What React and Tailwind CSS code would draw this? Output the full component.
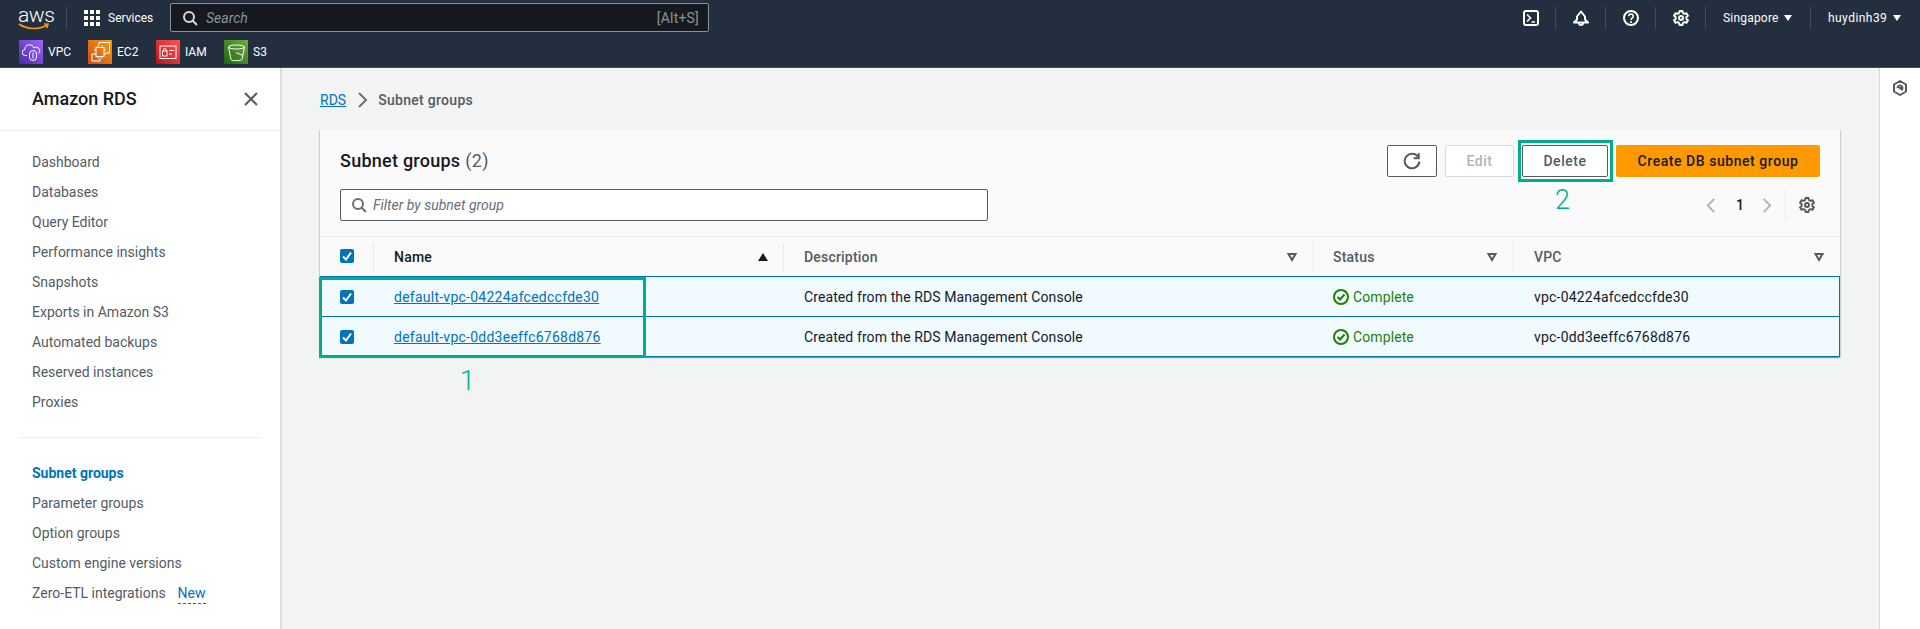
import React from 'react';

const font = "font-['Roboto','Liberation_Sans',sans-serif]";

const navTop = ['Dashboard', 'Databases', 'Query Editor', 'Performance insights', 'Snapshots', 'Exports in Amazon S3', 'Automated backups', 'Reserved instances', 'Proxies'];
const navBottom = ['Parameter groups', 'Option groups', 'Custom engine versions'];

const rows = [
    { name: 'default-vpc-04224afcedccfde30', vpc: 'vpc-04224afcedccfde30' },
    { name: 'default-vpc-0dd3eeffc6768d876', vpc: 'vpc-0dd3eeffc6768d876' },
];

const Checkbox = () => (
    <span className="flex h-[14px] w-[14px] items-center justify-center rounded-[2px] bg-[#0073bb]">
        <svg viewBox="0 0 14 14" className="h-[14px] w-[14px]" fill="none" stroke="#fff" strokeWidth="2">
            <path d="M3 7.5 6 10.5 11 3.5" />
        </svg>
    </span>
);

const FilterCaret = () => (
    <svg viewBox="0 0 10 10" className="h-[10px] w-[10px]" fill="none" stroke="#545b64" strokeWidth="2">
        <path d="M1.5 2h7L5 8z" />
    </svg>
);

const Chevron = ({ dir = 'right', color = '#aab7b8', size = 16 }) => (
    <svg viewBox="0 0 16 16" width={size} height={size} fill="none" stroke={color} strokeWidth="2">
        <path d={dir === 'right' ? 'M5 1l7 7-7 7' : 'M11 1 4 8l7 7'} />
    </svg>
);

const Gear = ({ color = '#fff' }) => (
    <svg viewBox="0 0 16 16" width="16" height="16" fill="none" stroke={color} strokeWidth="2" strokeLinejoin="round">
        <path d="M6.6 1h2.8l.5 2 1.6.9 2-.6 1.4 2.4-1.5 1.4v1.800l1.5 1.4-1.4 2.4-2-.6-1.600.9-.5 2H6.600l-.5-2-1.600-.9-2 .6L1.100 10.300l1.500-1.400V7.100L1.100 5.700l1.400-2.400 2 .6 1.600-.9z" />
        <circle cx="8" cy="8" r="2" />
    </svg>
);

const Search = ({ color }) => (
    <svg viewBox="0 0 16 16" width="16" height="16" fill="none" stroke={color} strokeWidth="2">
        <circle cx="7" cy="7" r="5" />
        <path d="M10.5 10.5 15 15" />
    </svg>
);

const Shortcut = ({ label, width, gradient, children }) => (
    <div className={`flex items-center ${width}`}>
        <span className={`flex h-6 w-6 items-center justify-center bg-gradient-to-tr ${gradient}`}>{children}</span>
        <span className="ml-[5px] text-xs text-white">{label}</span>
    </div>
);

const HeaderSep = () => <span className="ml-4 mr-[17px] h-[22px] w-px bg-[#414d5c]" />;

const Header = () => (
    <header className="h-[68px] shrink-0 border-b border-[#414d5c] bg-[#232f3e]">
        <div className="flex h-[35px] items-center pl-[18px] pr-[19px]">
            <div className="relative h-[22px] w-8 text-center">
                <span className="block text-[21px] font-light leading-[17px] tracking-[-0.4px] text-white">aws</span>
                <svg viewBox="0 0 32 8" className="absolute bottom-[-2px] left-0 h-2 w-8" fill="none" stroke="#ff9900" strokeWidth="1.6">
                    <path d="M1 1c8 5.5 20 6 28 1M26 1l4 .3-1.2 3.6" />
                </svg>
            </div>
            <HeaderSep />
            <svg viewBox="0 0 16 16" width="16" height="16" fill="#fff">
                <rect width="4" height="4" /><rect x="6" width="4" height="4" /><rect x="12" width="4" height="4" />
                <rect y="6" width="4" height="4" /><rect x="6" y="6" width="4" height="4" /><rect x="12" y="6" width="4" height="4" />
                <rect y="12" width="4" height="4" /><rect x="6" y="12" width="4" height="4" /><rect x="12" y="12" width="4" height="4" />
            </svg>
            <span className="ml-2 w-[62px] text-xs text-white">Services</span>
            <div className="flex h-[29px] w-[539px] items-center rounded-[2px] border border-[#879596] bg-[#16191f] pl-[11px] pr-[9px]">
                <Search color="#d5dbdb" />
                <span className="ml-[8px] flex-1 text-sm italic text-[#879596]">Search</span>
                <span className="text-sm tracking-[0.2px] text-[#879596]">[Alt+S]</span>
            </div>
            <div className="ml-auto flex items-center">
                <svg viewBox="0 0 16 16" width="16" height="16" fill="none" stroke="#fff" strokeWidth="2">
                    <rect x="1" y="1" width="14" height="14" rx="2" />
                    <path d="M4 4.5 7.5 8 4 11.5M8.5 12H12" strokeWidth="1.6" />
                </svg>
                <HeaderSep />
                <svg viewBox="0 0 16 16" width="16" height="16" fill="none" stroke="#fff" strokeWidth="2">
                    <path d="M8 1.5 12 6.5v3l3 3H1l3-3v-3z" strokeLinejoin="round" />
                    <path d="M6 13a2 2 0 0 0 4 0" />
                </svg>
                <HeaderSep />
                <svg viewBox="0 0 16 16" width="16" height="16" fill="none" stroke="#fff" strokeWidth="2">
                    <circle cx="8" cy="8" r="7" />
                    <path d="M5.8 6.2a2.2 2.2 0 1 1 3.4 1.8C8.4 8.5 8 9 8 10M8 11v2" strokeWidth="1.6" />
                </svg>
                <HeaderSep />
                <Gear />
                <HeaderSep />
                <span className="w-[55px] text-xs tracking-[0.2px] whitespace-nowrap text-white">Singapore</span>
                <svg viewBox="0 0 8 6" width="8" height="6" fill="#fff" className="ml-[6px]"><path d="M0 0h8L4 6z" /></svg>
                <span className="ml-[18px] mr-[17px] h-[22px] w-px bg-[#414d5c]" />
                <span className="w-[59px] text-xs tracking-[0.45px] whitespace-nowrap text-white">huydinh39</span>
                <svg viewBox="0 0 8 6" width="8" height="6" fill="#fff" className="ml-[6px]"><path d="M0 0h8L4 6z" /></svg>
            </div>
        </div>
        <div className="flex h-[32px] items-start pl-[19px] pt-[5px]">
            <Shortcut label="VPC" width="w-[69px]" gradient="from-[#4d27a8] to-[#a166ff]">
                <svg viewBox="0 0 24 24" width="24" height="24" fill="none" stroke="#fff" strokeWidth="1">
                    <path d="M8 15.5H6.5a3 3 0 0 1-.5-6 4.5 4.5 0 0 1 8.8-1.5A3.5 3.5 0 0 1 19.5 13.5" />
                    <rect x="10.5" y="10.5" width="7" height="10" rx="3.5" />
                    <path d="M14 12.5v6" />
                </svg>
            </Shortcut>
            <Shortcut label="EC2" width="w-[68px]" gradient="from-[#c8511b] to-[#ff9900]">
                <svg viewBox="0 0 24 24" width="24" height="24" fill="none" stroke="#fff" strokeWidth="1">
                    <path d="M11 5.5V2.5h10.5V13H18M7 14H4v7h8v-3" />
                    <rect x="8" y="7.5" width="8" height="9" />
                    <path d="M10 5.5v2M14 5.5v2M10 16.5v2M14 16.5v2M6 10h2M6 14h2M16 10h2M16 14h2" />
                </svg>
            </Shortcut>
            <Shortcut label="IAM" width="w-[68px]" gradient="from-[#bd0816] to-[#ff5252]">
                <svg viewBox="0 0 24 24" width="24" height="24" fill="none" stroke="#fff" strokeWidth="1">
                    <rect x="4" y="6" width="16" height="12.5" />
                    <rect x="6.5" y="11" width="4.5" height="5" />
                    <path d="M7.5 11V9.8a1.3 1.3 0 0 1 2.6 0V11M13 10.5h5M13 14h3" />
                </svg>
            </Shortcut>
            <Shortcut label="S3" width="w-[40px]" gradient="from-[#1b660f] to-[#6cae3e]">
                <svg viewBox="0 0 24 24" width="24" height="24" fill="none" stroke="#fff" strokeWidth="1">
                    <ellipse cx="12.5" cy="7" rx="8" ry="2" />
                    <path d="M4.5 7 7 19.5c.5 1.5 10.5 1.5 11 0L20.5 7M12 12.5l7 3" />
                </svg>
            </Shortcut>
        </div>
    </header>
);

const Sidebar = () => (
    <aside className="flex w-[281px] shrink-0 flex-col border-r border-[#d5dbdb] bg-white shadow-[1px_0_1px_rgba(0,0,0,0.06)]">
        <div className="flex h-[63px] items-center justify-between border-b border-[#eaeded] pl-8 pr-[21px]">
            <h2 className="text-lg font-medium text-[#16191f]">Amazon RDS</h2>
            <svg viewBox="0 0 16 16" width="16" height="16" fill="none" stroke="#545b64" strokeWidth="2"><path d="M2 2l12 12M14 2 2 14" /></svg>
        </div>
        <nav className="pt-4 text-sm text-[#545b64]">
            {navTop.map((item) => (
                <div key={item} className="flex h-[30px] items-center pl-8">{item}</div>
            ))}
        </nav>
        <div className="mx-5 mt-5 border-t border-[#eaeded]" />
        <nav className="pt-5 text-sm text-[#545b64]">
            <div className="flex h-[30px] items-center pl-8 font-bold text-[#0073bb]">Subnet groups</div>
            {navBottom.map((item) => (
                <div key={item} className="flex h-[30px] items-center pl-8">{item}</div>
            ))}
            <div className="flex h-[30px] items-center pl-8">
                Zero-ETL integrations
                <span className="ml-3 border-b border-dashed border-[#0073bb] text-[#0073bb]">New</span>
            </div>
        </nav>
    </aside>
);

const Column = ({ label, caret, dark, pad }) => (
    <div className={`flex h-[30px] items-center border-l border-[#eaeded] pr-4 text-sm font-medium tracking-[0.2px] ${pad}`}>
        <span className={dark ? 'text-[#16191f]' : 'text-[#545b64]'}>{label}</span>
        <span className="ml-auto">{caret}</span>
    </div>
);

const SubnetTable = () => (
    <section className="relative mt-[19px] rounded-[1px] bg-white shadow-[0_1px_1px_rgba(0,28,36,0.3),1px_1px_1px_rgba(0,28,36,0.15),-1px_1px_1px_rgba(0,28,36,0.15)]">
        <div className="flex h-[108px] justify-between border-b border-[#eaeded] bg-[#fafafa] px-5 pt-4">
            <div>
                <h1 className="flex h-8 items-center text-lg font-medium tracking-[0.25px] text-[#16191f]">
                    Subnet groups<span className="ml-[5px] font-normal text-[#545b64]">(2)</span>
                </h1>
                <div className="mt-[12px] flex h-[32px] w-[648px] items-center rounded-[2px] border border-[#545b64] bg-white pl-[10px]">
                    <Search color="#687078" />
                    <span className="ml-[6px] text-sm italic text-[#687078]">Filter by subnet group</span>
                </div>
            </div>
            <div className="flex flex-col items-end">
                <div className="flex h-8 items-center gap-2 text-sm font-medium tracking-[0.55px]">
                    <button className="flex h-8 w-[50px] items-center justify-center rounded-[2px] border border-[#545b64] bg-white">
                        <svg viewBox="0 0 16 16" width="18" height="18" fill="none" stroke="#545b64" strokeWidth="1.8">
                            <path d="M13.5 4.5A6.5 6.5 0 1 0 14.5 8.5" />
                            <path d="M14 1v4.5H9.5" />
                        </svg>
                    </button>
                    <button className="h-8 w-[69px] rounded-[2px] border border-[#d5dbdb] bg-white text-[#aab7b8]">Edit</button>
                    <button className="h-8 w-[86px] rounded-[2px] border border-[#545b64] bg-white text-[#545b64]">Delete</button>
                    <button className="h-8 w-[204px] rounded-[2px] bg-[#ff9900] text-[#16191f]">Create DB subnet group</button>
                </div>
                <div className="mt-3 flex h-8 items-center pr-[5px]">
                    <Chevron dir="left" size={15} />
                    <span className="ml-[17px] mr-[15px] text-sm font-medium text-[#16191f]">1</span>
                    <Chevron size={15} />
                    <span className="ml-[11px] mr-[13px] h-8 w-px bg-[#eaeded]" />
                    <Gear color="#545b64" />
                </div>
            </div>
        </div>
        <div className="grid grid-cols-[53px_410px_530px_200px_1fr] items-center bg-[#fafafa]">
            <div className="flex h-[39px] items-center pb-px pl-5"><Checkbox /></div>
            <Column label="Name" dark pad="pl-5" caret={<svg viewBox="0 0 10 8" width="10" height="8" fill="#16191f" className="mr-[-1px]"><path d="M5 0l5 8H0z" /></svg>} />
            <Column label="Description" pad="pl-5" caret={<FilterCaret />} />
            <Column label="Status" pad="pl-[19px]" caret={<FilterCaret />} />
            <Column label="VPC" pad="pl-5" caret={<FilterCaret />} />
        </div>
        <div className="border-b border-[#0073bb] bg-[#f1faff]">
            {rows.map((row) => (
                <div key={row.vpc} className="grid h-[40px] grid-cols-[53px_410px_530px_200px_1fr] items-center border-x border-t border-[#0073bb] text-sm tracking-[0.1px] text-[#16191f]">
                    <div className="pl-[19px]"><Checkbox /></div>
                    <a className="pl-5 tracking-[0.25px] text-[#0073bb] underline">{row.name}</a>
                    <div className="pl-5">Created from the RDS Management Console</div>
                    <div className="flex items-center pl-[19px] text-[#1d8102]">
                        <svg viewBox="0 0 16 16" width="16" height="16" fill="none" stroke="#1d8102" strokeWidth="2" className="mr-[4px]">
                            <circle cx="8" cy="8" r="7" />
                            <path d="M4.5 8 7 10.5 11.5 5.5" />
                        </svg>
                        Complete
                    </div>
                    <div className="pl-5 tracking-[0.2px]">{row.vpc}</div>
                </div>
            ))}
        </div>
        {/* annotations from the screenshot */}
        <div className="absolute left-[-1px] top-[148px] h-[81px] w-[327px] border-[3px] border-[#00ae8e]" />
        <div className="absolute left-[1198px] top-[11px] h-[42px] w-[95px] border-[3px] border-[#00ae8e]" />
        <span className="absolute left-[140px] top-[238px] text-[27px] font-light leading-7 text-[#00ae8e]">1</span>
        <span className="absolute left-[1235px] top-[57px] text-[27px] font-light leading-7 text-[#00ae8e]">2</span>
    </section>
);

export default function App() {
    return (
        <div className={`flex h-[629px] w-[1920px] flex-col overflow-hidden bg-[#f2f3f3] ${font}`}>
            <Header />
            <div className="flex min-h-0 flex-1">
                <Sidebar />
                <main className="flex-1 pl-[39px] pr-[39px] pt-[21px]">
                    <div className="flex h-[21px] items-center text-sm">
                        <a className="text-[#0073bb] underline">RDS</a>
                        <span className="mx-[8px]"><Chevron color="#687078" size={16} /></span>
                        <span className="font-medium tracking-[0.3px] text-[#545b64]">Subnet groups</span>
                    </div>
                    <SubnetTable />
                </main>
                <aside className="flex w-[41px] shrink-0 justify-center border-l border-[#d5dbdb] bg-white pt-3">
                    <svg viewBox="0 0 16 16" width="16" height="16" fill="none" stroke="#545b64" strokeWidth="2">
                        <path d="M8 1l6 3.5v7L8 15l-6-3.5v-7z" strokeLinejoin="round" />
                        <path d="M5.5 8A2.5 2.5 0 1 1 10 9.5L8 8h2" />
                    </svg>
                </aside>
            </div>
        </div>
    );
}
